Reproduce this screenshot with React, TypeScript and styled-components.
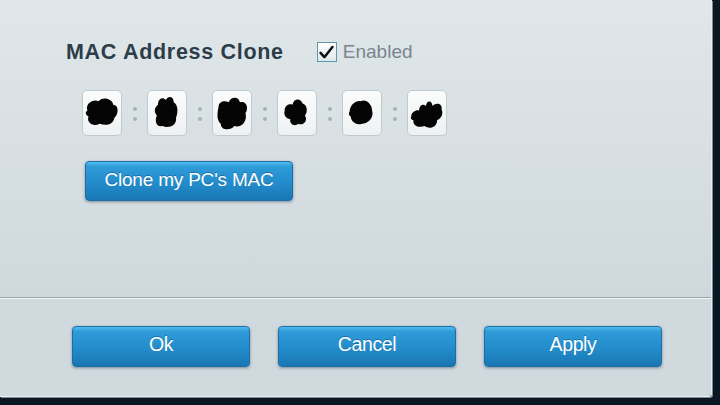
import styled, { createGlobalStyle } from "styled-components";

const GlobalStyle = createGlobalStyle`
  html, body {
    margin: 0;
    padding: 0;
    width: 720px;
    height: 405px;
    overflow: hidden;
    background: #0b1823;
    font-family: "Liberation Sans", Arial, sans-serif;
  }
`;

const blobs = [
  "M3 14 C1 8 8 4 13 6 C17 2 25 4 26 9 C31 9 31 17 27 20 C26 26 19 27 14 25 C8 28 2 24 4 19 C1 17 1 15 3 14 Z",
  "M8 9 C8 4 12 2 15 5 C17 1 22 2 22 7 C26 9 26 16 24 20 C25 27 17 29 12 27 C6 28 5 22 7 18 C4 15 5 11 8 9 Z",
  "M4 11 C4 6 10 5 13 7 C15 2 22 2 23 7 C29 5 31 12 28 16 C30 23 24 29 18 27 C15 31 6 31 6 25 C2 22 3 16 4 11 Z",
  "M5 14 C5 9 10 8 12 9 C13 4 19 3 21 8 C25 9 26 15 23 18 C26 22 22 27 17 25 C14 28 9 25 10 21 C6 21 4 17 5 14 Z",
  "M5 15 C5 9 11 5 15 6 C20 4 25 9 25 14 C27 20 21 25 16 25 C11 27 6 23 6 19 C4 18 4 16 5 15 Z",
  "M2 19 C2 15 7 13 9 14 C9 9 13 8 15 10 C16 5 20 5 21 10 C24 7 30 8 29 13 C31 17 28 21 25 22 C25 28 18 30 14 27 C8 29 3 26 4 22 C2 22 1 20 2 19 Z",
];

export default function App() {
  return (
    <>
      <GlobalStyle />
      <Panel>
        <Content>
          <TitleRow>
            <Title>MAC Address Clone</Title>
            <CheckLabel>
              <CheckBox>
                <svg viewBox="0 0 20 20" width="17" height="17">
                  <path d="M3 10.5 L7.5 15.5 L17 3.5" fill="none" stroke="#111" strokeWidth="3" strokeLinecap="round" strokeLinejoin="round" />
                </svg>
              </CheckBox>
              Enabled
            </CheckLabel>
          </TitleRow>
          <MacRow>
            {blobs.map((d, i) => (
              <MacGroup key={i}>
                {i > 0 && (
                  <Colon>
                    <Dot />
                    <Dot />
                  </Colon>
                )}
                <MacBox>
                  <svg viewBox="0 0 32 32" width="36" height="38" preserveAspectRatio="none">
                    <path d={d} fill="#050505" />
                  </svg>
                </MacBox>
              </MacGroup>
            ))}
          </MacRow>
          <CloneButton>Clone my PC's MAC</CloneButton>
        </Content>
        <Footer>
          <BlueButton $width="178px">Ok</BlueButton>
          <BlueButton $width="178px">Cancel</BlueButton>
          <BlueButton $width="178px">Apply</BlueButton>
        </Footer>
      </Panel>
    </>
  );
}

const Panel = styled.div`
  width: 711px;
  height: 396px;
  display: flex;
  flex-direction: column;
  border-right: 1px solid #e9eef1;
  border-bottom: 1px solid #e9eef1;
  border-bottom-right-radius: 3px;
  box-shadow: 1px 1px 0 #7d8a93;
  overflow: hidden;
`;

const Content = styled.div`
  height: 298px;
  padding: 39px 0 0 66px;
  box-sizing: border-box;
  background: linear-gradient(#e0e7eb, #cfd8dc);
  border-bottom: 1px solid #9aa5ab;
  display: flex;
  flex-direction: column;
  align-items: flex-start;
`;

const TitleRow = styled.div`
  display: flex;
  align-items: center;
  height: 26px;
`;

const Title = styled.span`
  font-size: 21.5px;
  font-weight: bold;
  color: #2c3d48;
  letter-spacing: 0.7px;
`;

const CheckLabel = styled.label`
  display: flex;
  align-items: center;
  margin-left: 33px;
  font-size: 19px;
  color: #7a858d;
`;

const CheckBox = styled.span`
  width: 18px;
  height: 18px;
  margin-right: 6px;
  border: 1px solid #5f98a8;
  background: linear-gradient(#ffffff, #dde8ec);
  display: flex;
  align-items: center;
  justify-content: center;
`;

const MacRow = styled.div`
  display: flex;
  align-items: center;
  margin: 25px 0 0 16px;
`;

const MacGroup = styled.div`
  display: flex;
  align-items: center;
`;

const Colon = styled.div`
  width: 25px;
  display: flex;
  flex-direction: column;
  align-items: center;
  gap: 6px;
  padding-top: 2px;
`;

const Dot = styled.span`
  width: 4px;
  height: 4px;
  border-radius: 50%;
  background: #a7b2b8;
`;

const MacBox = styled.div`
  width: 38px;
  height: 44px;
  border: 1px solid #c3cacd;
  border-radius: 5px;
  background: linear-gradient(#fbfcfc, #eef1f2);
  display: flex;
  align-items: center;
  justify-content: center;
`;

const BlueButton = styled.button<{ $width: string }>`
  width: ${(p) => p.$width};
  height: 41px;
  border: 1px solid #1b6ea6;
  border-radius: 4px;
  background: linear-gradient(#52bdef 0%, #2f9bd9 12%, #228ac8 60%, #1a76b4 100%);
  box-shadow: 0 1px 3px rgba(20, 40, 60, 0.45);
  color: #ffffff;
  font-family: "Liberation Sans", Arial, sans-serif;
  font-size: 19.5px;
  letter-spacing: -0.4px;
  text-shadow: 0 -1px 0 rgba(0, 40, 80, 0.35);
  padding: 0 0 4px;
  cursor: pointer;
`;

const CloneButton = styled(BlueButton).attrs({ $width: "208px" })`
  height: 40px;
  margin: 25px 0 0 19px;
  font-size: 19px;
  letter-spacing: -0.2px;
  padding: 0 0 2px;
`;

const Footer = styled.div`
  flex: 1;
  display: flex;
  align-items: flex-start;
  gap: 28px;
  padding: 27px 0 0 72px;
  background: #d0d9dd;
  border-top: 1px solid #f4f7f8;
`;
